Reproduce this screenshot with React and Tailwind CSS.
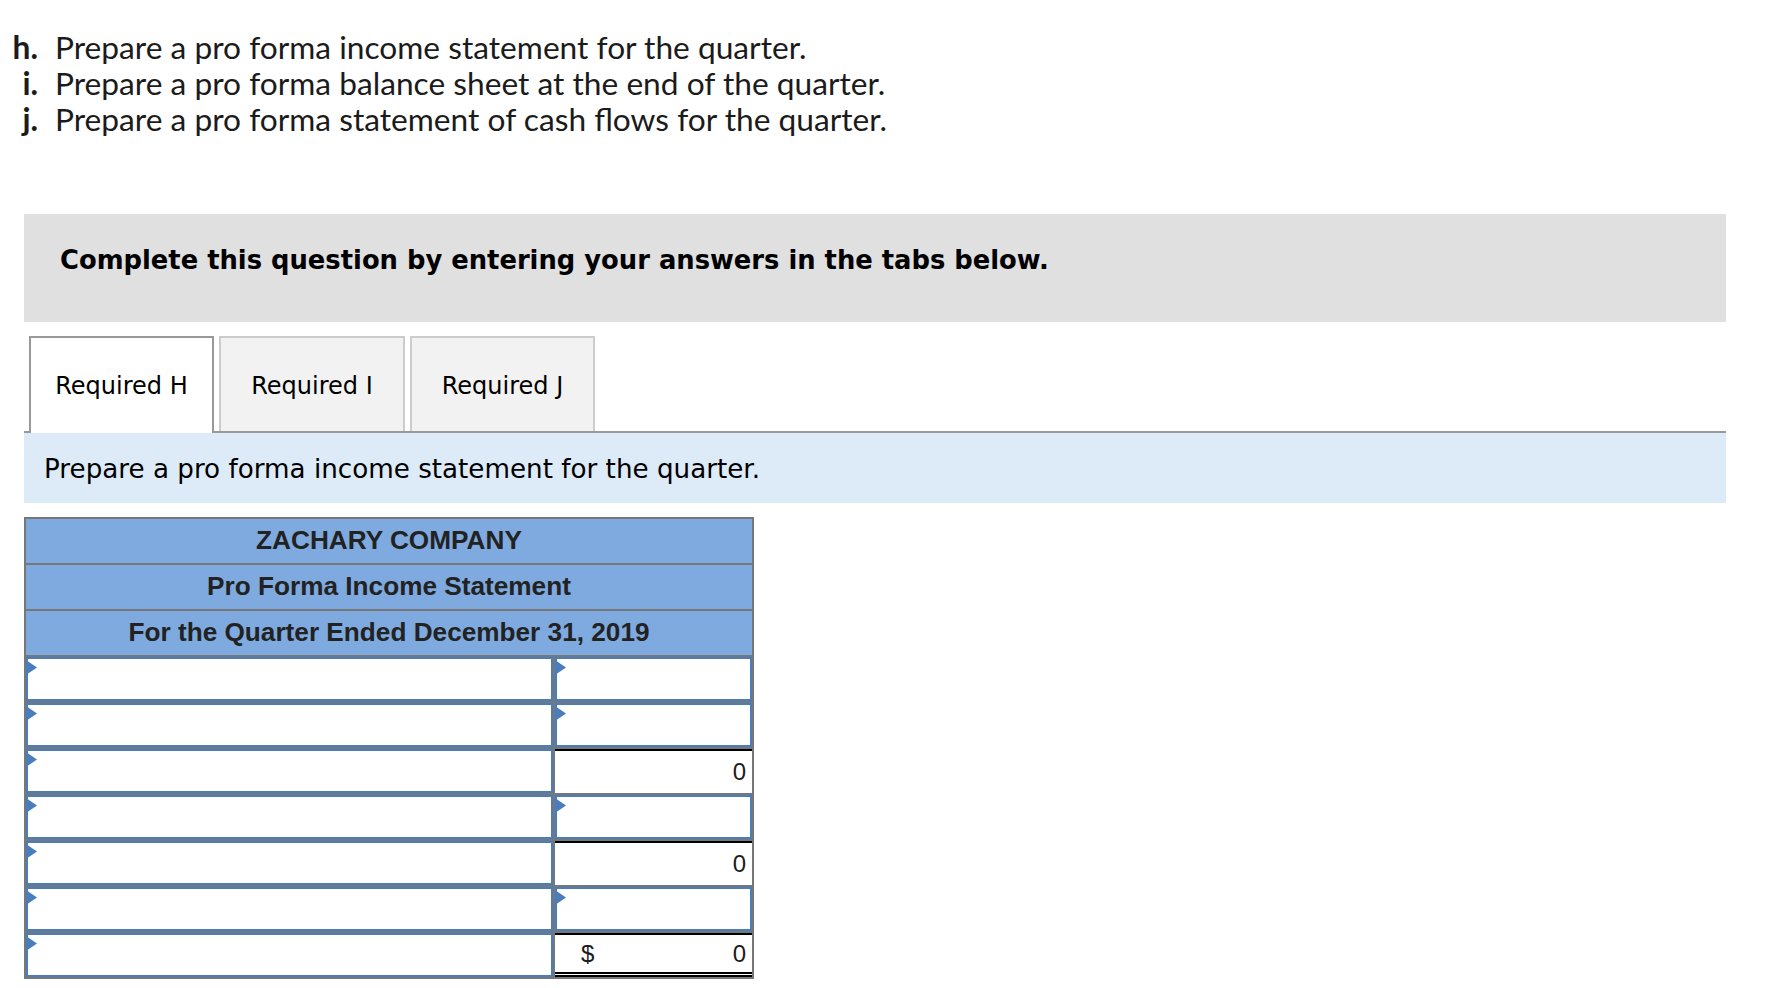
import React from 'react';

const rows = [
  { input: true },
  { input: true },
  { value: '0', topRule: true },
  { input: true },
  { value: '0', topRule: true },
  { input: true },
  { value: '0', topRule: true, dollar: true, double: true },
];

// little blue flag that marks a dropdown cell
function Flag() {
  return (
    <svg className="absolute -left-[2px] top-[1px]" width="11" height="15" viewBox="0 0 11 15">
      <polygon points="0,0 11,7.5 0,15" fill="#4a7dbb" />
    </svg>
  );
}

function InputCell() {
  return (
    <div className="relative bg-white border-2 border-[#4a7dbb] h-full">
      <Flag />
    </div>
  );
}

function ValueCell({ value, dollar, double }) {
  return (
    <div
      className={
        'relative bg-white h-full border-t-2 border-black flex items-center justify-between pr-[6px] pl-[26px] font-["Liberation_Sans",Arial,sans-serif] text-[24px] text-[#1b1b1b] ' +
        (double ? 'border-b-[5px] border-b-black border-double' : '')
      }
    >
      <span>{dollar ? '$' : ''}</span>
      <span>{value}</span>
    </div>
  );
}

export default function App() {
  return (
    <div className="w-[1788px] h-[988px] bg-white overflow-hidden text-[#1b1b1b]">
      <div className="pt-[29px] grid grid-cols-[38px_1fr] gap-x-[17px] font-['Lato',sans-serif] text-[31.7px] leading-[36px]">
        <span className="text-right font-bold">h.</span>
        <span>Prepare a pro forma income statement for the quarter.</span>
        <span className="text-right font-bold">i.</span>
        <span>Prepare a pro forma balance sheet at the end of the quarter.</span>
        <span className="text-right font-bold">j.</span>
        <span>Prepare a pro forma statement of cash flows for the quarter.</span>
      </div>

      <div className="mt-[77px] ml-[24px] w-[1702px] h-[108px] bg-[#e0e0e0] pl-[36px] pt-[27px]">
        <p className="font-['DejaVu_Sans',Verdana,sans-serif] font-bold text-[25.8px] text-black">
          Complete this question by entering your answers in the tabs below.
        </p>
      </div>

      <div className="mt-[14px] ml-[24px] w-[1702px] flex items-end gap-[5px] pl-[5px] border-b-2 border-[#999] font-['DejaVu_Sans',Verdana,sans-serif] text-[24px] text-black">
        <div className="relative -mb-[2px] w-[185px] h-[97px] bg-white border-2 border-b-0 border-[#999] flex items-center justify-center">
          Required H
        </div>
        <div className="w-[186px] h-[95px] bg-[#f2f2f2] border-2 border-b-0 border-[#ccc] flex items-center justify-center pt-[2px]">
          Required I
        </div>
        <div className="w-[185px] h-[95px] bg-[#f2f2f2] border-2 border-b-0 border-[#ccc] flex items-center justify-center pt-[2px]">
          Required J
        </div>
      </div>

      <div className="ml-[24px] w-[1702px] h-[70px] bg-[#ddebf8] pl-[20px] pt-[4px] flex items-center font-['DejaVu_Sans',Verdana,sans-serif] text-[26.2px] text-black">
        Prepare a pro forma income statement for the quarter.
      </div>

      <div className="mt-[14px] ml-[24px] w-[730px] bg-[#777] p-[2px] flex flex-col gap-[2px]">
        {['ZACHARY COMPANY', 'Pro Forma Income Statement', 'For the Quarter Ended December 31, 2019'].map((t) => (
          <div
            key={t}
            className="h-[44px] bg-[#7eaadf] flex items-center justify-center font-['Liberation_Sans',Arial,sans-serif] font-bold text-[26.2px] text-[#222]"
          >
            {t}
          </div>
        ))}
        {rows.map((r, i) => (
          <div key={i} className="h-[44px] grid grid-cols-[527px_1fr] gap-[2px]">
            <InputCell />
            {r.input ? <InputCell /> : <ValueCell value={r.value} dollar={r.dollar} double={r.double} />}
          </div>
        ))}
      </div>
    </div>
  );
}
